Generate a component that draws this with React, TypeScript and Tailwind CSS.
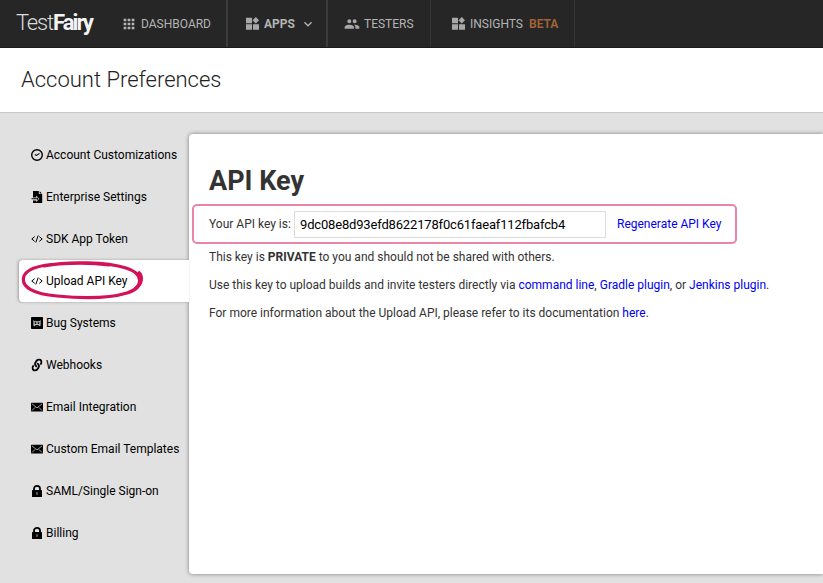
import React from "react";
import { MdApps, MdExpandMore, MdGroup } from "react-icons/md";
import { FaLink } from "react-icons/fa";

function WidgetsIcon() {
  return (
    <svg viewBox="0 0 13 13" className="h-[13px] w-[13px] shrink-0 text-[#a8a8a8]" fill="currentColor">
      <path d="M0 .7h6v5.5H0zM0 7.2h6v5.5H0zM7 7.2h6v5.5H7zM9.8 0 13 3.3 9.8 6.5 6.5 3.3z" />
    </svg>
  );
}

function GaugeIcon() {
  return (
    <svg viewBox="0 0 12 12" className="h-3 w-3" fill="none" stroke="currentColor">
      <circle cx="6" cy="6" r="5.3" strokeWidth="1.4" />
      <path d="m3.8 5.4 1.8 1 2.9-2" strokeWidth="1.1" />
    </svg>
  );
}

function FileImportIcon() {
  return (
    <svg viewBox="0 0 12 12" className="h-3 w-3" fill="currentColor">
      <path d="M2 0h5.8v3.1h3.4V12H2V9.4h3.3v1.7l3-3.3-3-3.2v1.9H2zM8.7.2l2.3 2.2H8.7z" />
      <path d="M.5 7.3H6V6l1.5 1.8L6 9.4V8.3H.5z" />
    </svg>
  );
}

function CodeIcon() {
  return (
    <svg viewBox="0 0 12 12" className="h-3 w-3" fill="none" stroke="currentColor" strokeWidth="1">
      <path d="M3.7 3.6.8 6l2.9 2.4M8.3 3.6 11.2 6 8.3 8.4M7.2 2.5l-2.4 7" />
    </svg>
  );
}

function BugIcon() {
  return (
    <svg viewBox="0 0 12 12" className="h-3 w-3">
      <rect width="12" height="12" rx=".8" fill="currentColor" />
      <path d="M2.4 2.8 3.5 4.3h5l1.1-1.5v5.7l-1 .8-.8-1-.9 1H5.1l-.9-1-.8 1-1-.8z" fill="#bdbdbd" />
      <path d="M3.7 5.2h1.6v1.8H3.7zM6.7 5.2h1.6v1.8H6.7zM4.6 8h2.8v1.3H4.6z" fill="currentColor" />
    </svg>
  );
}

function MailIcon() {
  return (
    <svg viewBox="0 0 12 12" className="h-3 w-3">
      <rect y="1.7" width="12" height="8.8" rx=".5" fill="currentColor" />
      <path d="m1 2.9 5 4 5-4M1 9.5l3.1-3.1M11 9.5 7.9 6.4" stroke="#d0d0d0" strokeWidth=".75" fill="none" />
    </svg>
  );
}

function LockIcon() {
  return (
    <svg viewBox="0 0 12 12" className="h-3 w-3">
      <path d="M3 6V3.5a3 2.6 0 0 1 6 0V6" fill="none" stroke="currentColor" strokeWidth="1.8" />
      <rect x="1" y="5" width="10" height="7" rx=".6" fill="currentColor" />
      <path d="M6 7.2v2.6" stroke="#999" strokeWidth="1.2" />
    </svg>
  );
}

const items = [
  { label: "Account Customizations", icon: <GaugeIcon /> },
  { label: "Enterprise Settings", icon: <FileImportIcon /> },
  { label: "SDK App Token", icon: <CodeIcon /> },
  { label: "Upload API Key", icon: <CodeIcon />, active: true },
  { label: "Bug Systems", icon: <BugIcon /> },
  { label: "Webhooks", icon: <FaLink className="h-3 w-3 -rotate-12" /> },
  { label: "Email Integration", icon: <MailIcon /> },
  { label: "Custom Email Templates", icon: <MailIcon /> },
  { label: "SAML/Single Sign-on", icon: <LockIcon /> },
  { label: "Billing", icon: <LockIcon /> },
];

function Header() {
  return (
    <header className="flex h-12 shrink-0 border-b border-[#1d191b] bg-[#262626] text-[12px] leading-[47px] text-[#b4b4b4]">
      <div className="w-[105px] shrink-0 pl-4 text-[22px] leading-[45px] text-[#dcdcdc]">
        <span className="font-light tracking-[-1.2px]">Test</span>
        <span className="font-bold tracking-[-1.9px] text-[#f4f4f4]">Fairy</span>
      </div>
      <nav className="flex">
        <a className="flex w-[123px] items-center border-r-2 border-[#3b3b3b] pl-4">
          <MdApps className="mr-1 h-4 w-4 shrink-0" />
          <span className="pt-px">DASHBOARD</span>
        </a>
        <a className="flex w-[100px] items-center border-r-2 border-[#3b3b3b] pl-[18px] font-bold">
          <WidgetsIcon />
          <span className="ml-[5px] pt-0.5">APPS</span>
          <MdExpandMore className="ml-[5px] h-4 w-4" />
        </a>
        <a className="flex w-[103px] items-center border-r border-[#363636] pl-4">
          <MdGroup className="h-4 w-4 text-[#a8a8a8]" />
          <span className="ml-1 pt-px">TESTERS</span>
        </a>
        <a className="flex w-[144px] items-center border-r border-[#363636] pl-[21px]">
          <WidgetsIcon />
          <span className="ml-[5px] pt-px">INSIGHTS</span>
          <b className="ml-[6px] pt-px text-[#9f6236]">BETA</b>
        </a>
      </nav>
    </header>
  );
}

function Sidebar() {
  return (
    <aside className="relative z-10 w-[189px] shrink-0">
      {items.map(({ label, icon, active }) => (
        <div
          key={label}
          className={
            active
              ? "relative ml-[19px] flex h-[42px] items-center gap-[3px] rounded-l-[4px] bg-white pl-3 shadow-[-1px_0_3px_rgba(0,0,0,0.3)]"
              : "ml-[19px] flex h-[42px] items-center gap-[3px] pl-3"
          }
        >
          {icon}
          <span className="whitespace-nowrap">{label}</span>
          {active && (
            <svg className="absolute left-0 top-0" width="130" height="42" viewBox="0 0 130 42" fill="none">
              <path d="M25 6C50 1 88 2 107 8c19 6 17 20 1 25-20 6-50 5-70 3C14 34 3 27 4.500 18 6 9 18 5 40 4c15-1 35-1 50 1" stroke="#d2125a" strokeWidth="3.2" strokeLinecap="round" />
              <path d="M119 12c6 5 3 13-3 17" stroke="#d2125a" strokeWidth="3.6" />
            </svg>
          )}
        </div>
      ))}
    </aside>
  );
}

function Link({ children }: { children: React.ReactNode }) {
  return <a className="text-[#0000ee]">{children}</a>;
}

export default function App() {
  return (
    <div className="flex h-[583px] w-[823px] flex-col overflow-hidden bg-[#e1e1e1] font-['Roboto',sans-serif] text-[12px] text-black">
      <Header />
      <div className="h-[65px] shrink-0 border-b border-[#c8c8c8] bg-white pl-[21px] text-[22px] font-light leading-[63px] text-[#222]">
        Account Preferences
      </div>
      <div className="flex pt-[21px]">
        <Sidebar />
        <main className="h-[440px] flex-1 rounded-l-[4px] bg-white pt-7 text-[#333] shadow-[0_0_4px_rgba(0,0,0,0.45)]">
          <h1 className="h-[42px] pl-5 text-[27px] font-bold leading-[39px] text-[#333]">API Key</h1>
          <div className="ml-[3px] flex h-10 w-[545px] items-center rounded-[5px] border-2 border-[#ec84a9] pl-[15px]">
            <span className="w-[85px]">Your API key is:</span>
            <input
              readOnly
              value="9dc08e8d93efd8622178f0c61faeaf112fbafcb4"
              className="h-[27px] w-[312px] border border-[#ddd] px-[5px] font-['Roboto',sans-serif] text-[13px] tracking-[-0.17px] text-black outline-none"
            />
            <span className="ml-[11px]"><Link>Regenerate API Key</Link></span>
          </div>
          <div className="-mt-px pl-5 leading-7">
            <p>This key is <b>PRIVATE</b> to you and should not be shared with others.</p>
            <p>Use this key to upload builds and invite testers directly via <Link>command line</Link>, <Link>Gradle plugin</Link>, or <Link>Jenkins plugin</Link>.</p>
            <p>For more information about the Upload API, please refer to its documentation <Link>here</Link>.</p>
          </div>
        </main>
      </div>
    </div>
  );
}
